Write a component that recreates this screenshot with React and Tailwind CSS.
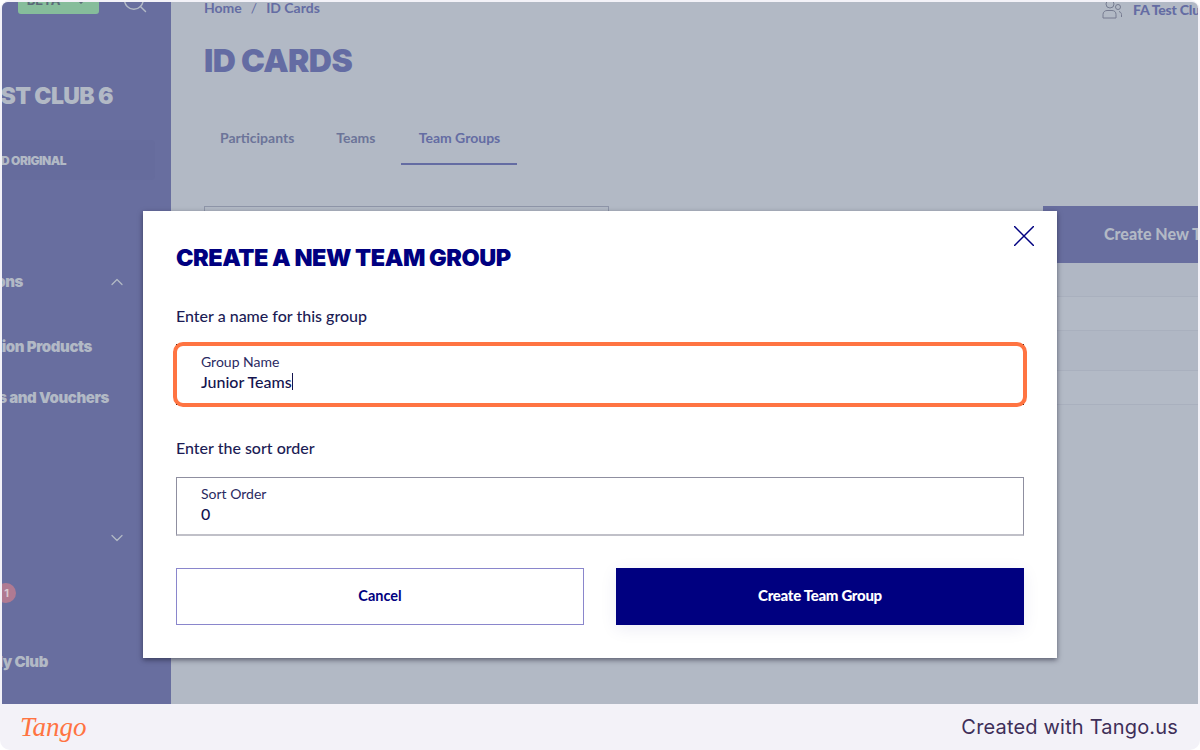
import { ChevronDown, ChevronUp, Search } from 'lucide-react';

const lato = { fontFamily: 'Lato, "Liberation Sans", sans-serif' };

function SideText({ width, className = '', children }) {
  return (
    <div className={`flex justify-end whitespace-nowrap font-black text-[#b2b9c5] ${className}`} style={{ width }}>
      {children}
    </div>
  );
}

function Sidebar() {
  return (
    <aside className="w-[169px] h-full shrink-0 bg-[#686e9f] overflow-hidden flex flex-col font-['Inter',sans-serif]">
      <div className="flex items-center -mt-[14px] h-[26px] pl-4">
        <div className="w-[81px] h-[26px] rounded-[3px] bg-[#86bd9b] flex items-center justify-center gap-3 text-[13px] font-bold text-[#5a6a78]">
          <span>BETA</span>
          <ChevronDown size={18} strokeWidth={1.5} />
        </div>
        <Search size={28} strokeWidth={1.25} className="ml-[22px] text-[#b2b9c5]" />
      </div>

      <SideText width="111px" className="mt-[67px] h-[30px] items-center text-[23px] tracking-[-0.6px]">
        TEST CLUB 6
      </SideText>

      <div className="mt-[29px] w-[153px] h-[40px] rounded bg-[#666c9d] flex items-center pt-[2px]">
        <SideText width="64px" className="text-[12px] tracking-[-0.5px]">ID ORIGINAL</SideText>
      </div>

      <div className="mt-[92px] flex items-center justify-between h-[20px] pr-[44px]">
        <SideText width="21px" className="text-[15px] tracking-[-0.4px]">Registrations</SideText>
        <ChevronUp size={20} strokeWidth={1.5} className="text-[#b2b9c5]" />
      </div>
      <SideText width="90px" className="mt-[45px] h-[20px] items-center text-[15px] tracking-[-0.4px]">
        Registration Products
      </SideText>
      <SideText width="107px" className="mt-[31px] h-[20px] items-center text-[15px] tracking-[-0.4px]">
        Discounts and Vouchers
      </SideText>

      <div className="mt-[120px] h-[20px] flex justify-end pr-[44px]">
        <ChevronDown size={20} strokeWidth={1.5} className="text-[#b2b9c5]" />
      </div>
      <div className="mt-[35px] -ml-[6px] w-[20px] h-[20px] rounded-full bg-[#b07a92] flex items-center justify-end pr-[7px] text-[11px] font-bold text-[#d8c8d0]">
        1
      </div>
      <SideText width="46px" className="mt-[49px] h-[20px] items-center text-[15px] tracking-[-0.4px]">
        My Club
      </SideText>
    </aside>
  );
}

function Background() {
  return (
    <main className="flex-1 min-w-0 h-full overflow-hidden pl-[33px] text-[#646ca3]" style={lato}>
      <div className="flex justify-between -mt-[4px] h-[18px] items-center">
        <div className="flex gap-[9px] text-[14px] font-bold">
          <span>Home</span>
          <span className="font-normal">/</span>
          <span>ID Cards</span>
        </div>
        <div className="flex items-center gap-[10px] mt-[4px] whitespace-nowrap w-[96px] shrink-0 overflow-hidden">
          <svg width="21" height="20" viewBox="0 0 21 20" fill="none" stroke="#767b90" strokeWidth="1" className="shrink-0">
            <circle cx="8" cy="5" r="4" />
            <path d="M1 19v-3.500c0-2.500 2-4 4-4h5c2.500 0 4 1.500 4 4V19z" />
            <circle cx="16" cy="8" r="2.500" />
            <path d="M17 12.500c1.500.5 2.500 1.500 2.500 3V18" />
          </svg>
          <span className="text-[14px] font-black tracking-[-0.2px]">FA Test Club</span>
        </div>
      </div>

      <h1 className="mt-[26px] h-[38px] flex items-center text-[32px] leading-none font-black font-['Inter',sans-serif] tracking-[-0.6px]">
        ID CARDS
      </h1>

      <div className="mt-[31px] flex text-[14px] font-bold text-[#6c7499]">
        <div className="h-[54px] pt-[16px] ml-[16px] mr-[42px]">Participants</div>
        <div className="h-[54px] pt-[16px] mr-[26px]">Teams</div>
        <div className="h-[54px] w-[116px] pt-[16px] text-center border-b-2 border-[#646ca3] text-[#646ca3]">Team Groups</div>
      </div>

      <div className="mt-[41px] flex justify-between">
        <div className="w-[405px] h-[57px] border border-[#8e95a8]" />
        <div className="w-[155px] h-[57px] bg-[#686e9f] text-[#b2b9c5] font-black text-[16px] whitespace-nowrap overflow-hidden pl-[61px] pt-[16px]">
          Create New Team Group
        </div>
      </div>

      <div className="-ml-[33px]">
        <div className="h-[34px] border-b border-[#a9b0be] bg-[#b0b7c4]" />
        <div className="h-[34px] border-b border-[#a9b0be] bg-[#b3bac6]" />
        <div className="h-[40px] border-b border-[#a9b0be] bg-[#b0b7c4]" />
        <div className="h-[34px] border-b border-[#a9b0be] bg-[#b3bac6]" />
      </div>
    </main>
  );
}

function Modal() {
  return (
    <div
      className="absolute left-[143px] top-[211px] w-[914px] h-[447px] bg-white shadow-[0_2px_5px_rgba(20,20,40,0.55)] pl-[33px] pr-[33px] text-[#1c1c55]"
      style={lato}
    >
      <button className="absolute right-[23px] top-[15px] text-[#000080]" aria-label="Close">
        <svg width="20" height="20" viewBox="0 0 20 20" fill="none" stroke="currentColor" strokeWidth="1.5">
          <path d="M0 0 20 20M20 0 0 20" />
        </svg>
      </button>

      <h2 className="pt-[32px] h-[62px] text-[23.500px] leading-[30px] font-black text-[#000080] whitespace-nowrap tracking-[-0.48px] font-['Inter',sans-serif]">
        CREATE A NEW TEAM GROUP
      </h2>
      <p className="mt-[33px] text-[16px] leading-[20px] font-medium">Enter a name for this group</p>

      <div className="relative mt-[18px]">
        <div className="h-[61px] border border-black pl-[24px] pt-[8px]">
          <div className="text-[14px] leading-[18px] text-[#2a2a62]">Group Name</div>
          <div className="text-[16px] leading-[21px] font-medium text-[#14144f] flex items-center">
            Junior Teams
            <span className="inline-block w-px h-[17px] bg-[#14144f]" />
          </div>
        </div>
        <div className="absolute -left-[3px] -right-[3px] -top-[2px] -bottom-[2px] rounded-[10px] border-[4px] border-[#ff7442]" />
      </div>

      <p className="mt-[33px] text-[16px] leading-[20px] font-medium">Enter the sort order</p>
      <div className="mt-[19px] h-[59px] border border-[#8f8fa0] border-b-2 border-b-[#c0c0c8] pl-[24px] pt-[7px]">
        <div className="text-[14px] leading-[18px] text-[#2a2a62]">Sort Order</div>
        <div className="text-[16px] leading-[22px] font-medium text-[#14144f]">0</div>
      </div>

      <div className="mt-[32px] flex justify-between">
        <button className="w-[408px] h-[57px] pb-[2px] border border-[#8a86cc] text-[#000080] text-[14.500px] font-bold">Cancel</button>
        <button className="w-[408px] h-[57px] pb-[3px] bg-[#000080] text-white text-[15px] font-black tracking-[-0.3px] shadow-[0_4px_16px_rgba(0,0,128,0.08)]">
          Create Team Group
        </button>
      </div>
    </div>
  );
}

export default function App() {
  return (
    <div className="relative w-[1200px] h-[750px] overflow-hidden bg-white">
      <div className="w-full h-full rounded-[10px] bg-[#f3f2f8] overflow-hidden flex flex-col pt-[2px] px-[2px]">
        <div className="h-[702px] shrink-0 flex bg-[#b2b9c5] rounded-t-[6px] overflow-hidden">
          <Sidebar />
          <Background />
        </div>
        <footer className="flex-1 flex items-center justify-between pl-[18px] pr-[20px]">
          <span className="font-['Liberation_Serif',serif] italic text-[27px] leading-none text-[#ff7442]">Tango</span>
          <span className="font-['Inter',sans-serif] text-[20px] tracking-[0.18px] text-[#3e2f58]">Created with Tango.us</span>
        </footer>
      </div>
      <Modal />
    </div>
  );
}
